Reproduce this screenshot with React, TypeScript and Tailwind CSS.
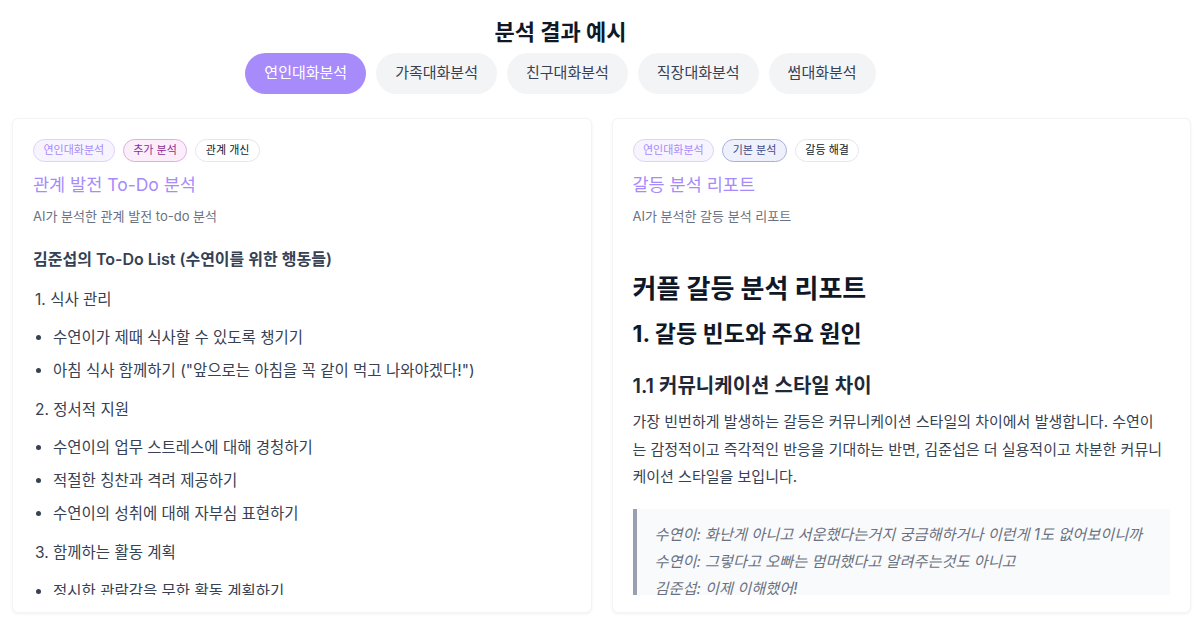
import { useState } from "react";

const TABS = ["연인대화분석", "가족대화분석", "친구대화분석", "직장대화분석", "썸대화분석"];

type Tone = "violet" | "fuchsia" | "indigo" | "plain";

function Tag({ label, tone }: { label: string; tone: Tone }) {
  const tones = {
    violet: "bg-[#f7f4ff] border-[#ddd3fd] text-[#a78bfa]",
    fuchsia: "bg-[#fbeefa] border-[#dcb0e2] text-[#8b2c97]",
    indigo: "bg-[#eef0fb] border-[#a9b0d8] text-[#3b4a8a]",
    plain: "bg-white border-gray-200 text-gray-900",
  };
  return (
    <span className={`inline-flex items-center h-[23px] px-[9.5px] rounded-full border text-[11px] ${tones[tone]}`}>
      {label}
    </span>
  );
}

function Card({
  tags,
  title,
  subtitle,
  children,
}: {
  tags: { label: string; tone: Tone }[];
  title: string;
  subtitle: string;
  children: React.ReactNode;
}) {
  return (
    <div className="flex-1 min-w-0 bg-white border border-gray-100 rounded-md shadow-[0_1px_3px_rgba(0,0,0,0.06)] px-5 pt-5 pb-[17px]">
      <div className="flex gap-2">
        {tags.map((t) => (
          <Tag key={t.label} {...t} />
        ))}
      </div>
      <h2 className="mt-[10px] text-[17.5px] leading-[26px] text-[#a78bfa]">{title}</h2>
      <p className="mt-[8px] text-[13px] leading-5 text-gray-500">{subtitle}</p>
      <div className="mt-2 h-[361px] overflow-hidden">{children}</div>
    </div>
  );
}

export default function App() {
  const [active, setActive] = useState(0);

  return (
    <div className="min-h-screen bg-white font-['Inter','Noto_Sans_CJK_KR',sans-serif] text-gray-700">
      {/* Header */}
      <div className="flex flex-col items-center pt-[18px] pr-[79px]">
        <h1 className="text-[22px] leading-7 font-bold text-gray-900">분석 결과 예시</h1>
        <div className="mt-[7px] flex gap-[10px]">
          {TABS.map((t, i) => (
            <button
              key={t}
              onClick={() => setActive(i)}
              className={`h-[41px] px-[19px] rounded-full text-[15px] ${
                i === active ? "bg-[#a78bfa] text-white" : "bg-gray-100 text-gray-700"
              }`}
            >
              {t}
            </button>
          ))}
        </div>
      </div>

      {/* Cards */}
      <div className="flex gap-5 pl-3 pr-[9px] mt-6">
        <Card
          tags={[
            { label: "연인대화분석", tone: "violet" },
            { label: "추가 분석", tone: "fuchsia" },
            { label: "관계 개신", tone: "plain" },
          ]}
          title="관계 발전 To-Do 분석"
          subtitle="AI가 분석한 관계 발전 to-do 분석"
        >
          <h3 className="mt-[13px] text-[16px] leading-6 font-semibold text-gray-700">
            김준섭의 To-Do List (수연이를 위한 행동들)
          </h3>
          <p className="mt-[17px] text-[15.5px] leading-6 pl-0.5">1. 식사 관리</p>
          <ul className="mt-[14px] list-disc pl-5 space-y-[9px] text-[15.5px] leading-6">
            <li>수연이가 제때 식사할 수 있도록 챙기기</li>
            <li>아침 식사 함께하기 ("앞으로는 아침을 꼭 같이 먹고 나와야겠다!")</li>
          </ul>
          <p className="mt-[15px] text-[15.5px] leading-6 pl-0.5">2. 정서적 지원</p>
          <ul className="mt-[14px] list-disc pl-5 space-y-[9px] text-[15.5px] leading-6">
            <li>수연이의 업무 스트레스에 대해 경청하기</li>
            <li>적절한 칭찬과 격려 제공하기</li>
            <li>수연이의 성취에 대해 자부심 표현하기</li>
          </ul>
          <p className="mt-[15px] text-[15.5px] leading-6 pl-0.5">3. 함께하는 활동 계획</p>
          <ul className="mt-[15px] list-disc pl-5 space-y-[9px] text-[15.5px] leading-6">
            <li>정시한 관람감을 무한 활동 계획하기</li>
            <li>주말 데이트 계획 세우기</li>
          </ul>
        </Card>

        <Card
          tags={[
            { label: "연인대화분석", tone: "violet" },
            { label: "기본 분석", tone: "indigo" },
            { label: "갈등 해결", tone: "plain" },
          ]}
          title="갈등 분석 리포트"
          subtitle="AI가 분석한 갈등 분석 리포트"
        >
          <h1 className="mt-[37px] text-[26px] leading-9 font-bold text-gray-900">커플 갈등 분석 리포트</h1>
          <h2 className="mt-[11px] text-[23px] leading-8 font-bold text-gray-900">1. 갈등 빈도와 주요 원인</h2>
          <h3 className="mt-[22px] text-[20px] leading-7 font-semibold text-gray-800">1.1 커뮤니케이션 스타일 차이</h3>
          <p className="mt-2 text-[15px] leading-[27.5px] text-gray-700">
            가장 빈번하게 발생하는 갈등은 커뮤니케이션 스타일의 차이에서 발생합니다. 수연이
            <br />는 감정적이고 즉각적인 반응을 기대하는 반면, 김준섭은 더 실용적이고 차분한 커뮤니
            <br />
            케이션 스타일을 보입니다.
          </p>
          <blockquote className="mt-[18px] border-l-4 border-gray-400 bg-gray-50 pl-[18px] pr-4 py-[12px] italic text-[15.2px] leading-[27px] text-gray-500">
            <p className="whitespace-nowrap">수연이: 화난게 아니고 서운했다는거지 궁금해하거나 이런게 1도 없어보이니까</p>
            <p className="whitespace-nowrap">수연이: 그렇다고 오빠는 멈머했다고 알려주는것도 아니고</p>
            <p className="whitespace-nowrap">김준섭: 이제 이해했어!</p>
          </blockquote>
        </Card>
      </div>
    </div>
  );
}
